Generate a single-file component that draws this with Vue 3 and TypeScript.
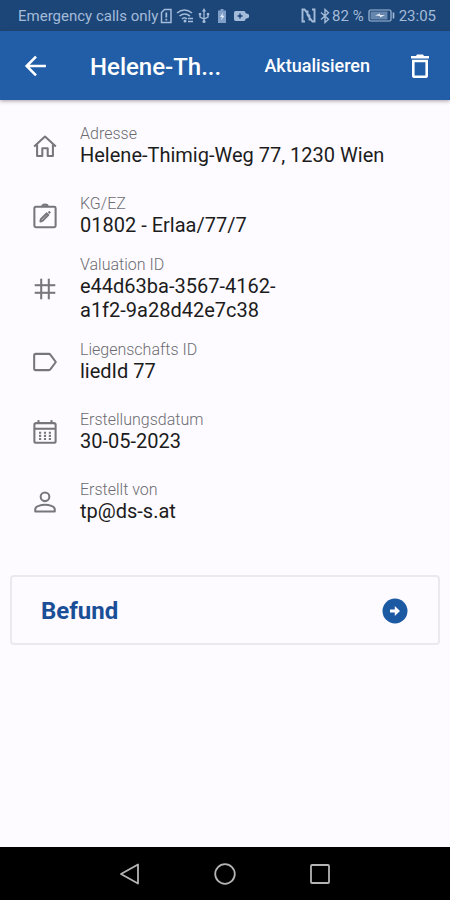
<script setup lang="ts">
interface Detail {
  label: string
  value: string
  paths: string[]
}

const details: Detail[] = [
  {
    label: 'Adresse',
    value: 'Helene-Thimig-Weg 77, 1230 Wien',
    paths: ['M2 12.5 12 3.2 22 12.500', 'M4.700 10.500V21.300H9.500V14H14.500V21.300H19.300V10.500'],
  },
  {
    label: 'KG/EZ',
    value: '01802 - Erlaa/77/7',
    paths: [
      'M3.500 3.500H20.500Q21.800 3.500 21.800 4.800V21Q21.800 22.300 20.500 22.300H3.500Q2.200 22.300 2.200 21V4.800Q2.200 3.500 3.500 3.500Z',
      'M9.500 3.500Q9.500 1.500 12 1.500T14.500 3.500',
      'M7.800 17 8.200 14.900 13.500 9.600 15 11.100 9.700 16.500Z',
      'M15.300 7.900 16.800 9.400',
    ],
  },
  {
    label: 'Valuation ID',
    value: 'e44d63ba-3567-4162-\na1f2-9a28d42e7c38',
    paths: ['M8.500 2.500V21.500', 'M15.500 2.500V21.500', 'M2.500 8.500H21.500', 'M2.500 15.500H21.500'],
  },
  {
    label: 'Liegenschafts ID',
    value: 'liedId 77',
    paths: ['M3.5 4.500H15.5Q16.5 4.500 17.1 5.4L22 12 17.1 18.6Q16.5 19.500 15.5 19.500H3.5Q2 19.500 2 18V6Q2 4.500 3.5 4.500Z'],
  },
  {
    label: 'Erstellungsdatum',
    value: '30-05-2023',
    paths: [
      'M4 3.8H20Q21.8 3.8 21.8 5.3V20.5Q21.8 22 20 22H4Q2.2 22 2.2 20.5V5.3Q2.2 3.8 4 3.8Z',
      'M2.2 9H21.800',
      'M6 1V4.500',
      'M18 1V4.500',
      'M6.500 12.700H8.500M11 12.700H13M15.500 12.700H17.500',
      'M6.500 15.600H8.500M11 15.600H13M15.500 15.600H17.500',
      'M6.500 18.500H8.500M11 18.500H13M15.500 18.500H17.500',
    ],
  },
  {
    label: 'Erstellt von',
    value: 'tp@ds-s.at',
    paths: [
      'M12 3.2A4 4 0 1 1 12 11.2A4 4 0 1 1 12 3.2Z',
      'M3 20.8V18.6C3 15.9 8.5 14.6 12 14.6S21 15.9 21 18.6V20.8Z',
    ],
  },
]
</script>

<template>
  <div class="screen">
    <div class="status">
      <div class="status-group">
        <span>Emergency calls only</span>
        <svg class="sim" width="12" height="16" viewBox="0 0 12 16" aria-hidden="true">
          <path d="M4.5 1.5H11V14.5H1.5V4.5Z" fill="none" stroke="currentColor" stroke-width="1.5" />
          <path d="M6.300 4.500V9.500M6.300 10.800V12.500" fill="none" stroke="currentColor" stroke-width="1.8" />
        </svg>
        <svg class="wifi" width="18" height="16" viewBox="0 0 18 16" aria-hidden="true">
          <g fill="none" stroke="currentColor" stroke-width="1.6">
            <path d="M1 5Q8.500-1 16 5" />
            <path d="M3.500 8Q8.500 4 14 8" />
            <path d="M6 11Q8.500 8.500 11 11" />
            <path d="M12 10.500H17M12 13.500H17" />
          </g>
          <circle cx="9" cy="13" r="1.500" fill="currentColor" />
        </svg>
        <svg class="usb" width="12" height="16" viewBox="0 0 12 16" aria-hidden="true">
          <path d="M6 2V13M2 6V9L6 11 10 9V6" fill="none" stroke="currentColor" stroke-width="1.3" />
          <path d="M6 0 8 3.500H4ZM.8 5H3.200V7.300H.8ZM8.800 5H11.200V7.300H8.800Z" fill="currentColor" />
          <circle cx="6" cy="13.500" r="1.600" fill="currentColor" />
        </svg>
        <svg class="cell" width="8" height="14" viewBox="0 0 8 14" aria-hidden="true">
          <path d="M2.500 0H5.500V1.500H8V14H0V1.500H2.500Z" fill="#7f9fc9" />
          <path d="M5 3.500 2 8H4L3 11.500 6.500 6.800H4.500Z" fill="#e3ecf8" />
        </svg>
        <svg class="cam" width="16" height="12" viewBox="0 0 16 12" aria-hidden="true">
          <path d="M1.500 1H10Q11.500 1 11.500 3L15 4.500V7.500L11.500 9Q11.500 11 10 11H1.500Q0 11 0 9V3Q0 1 1.500 1Z" fill="currentColor" />
          <path d="M6 3.500V8.500M3.500 6H8.500" stroke="#1c4677" stroke-width="1.500" />
        </svg>
      </div>
      <div class="status-group">
        <svg width="15" height="15" viewBox="0 0 15 15" aria-hidden="true">
          <path d="M4 13.500H1.500V1.500H3.500L8.500 8V12.500M11 1.500H13.500V13.500H11.500L6.500 7V2.500" fill="none" stroke="currentColor" stroke-width="1.900" />
        </svg>
        <svg class="bluetooth" width="10" height="16" viewBox="0 0 10 16" aria-hidden="true">
          <path d="M1 4.500 8.500 11.300 5 14.500V1.500L8.500 4.700 1 11.500" fill="none" stroke="currentColor" stroke-width="1.400" />
        </svg>
        <span>82 %</span>
        <svg class="battery" width="27" height="13" viewBox="0 0 27 13" aria-hidden="true">
          <rect x="1" y="1" width="22" height="11" rx="1.500" fill="none" stroke="currentColor" stroke-width="1.200" />
          <rect x="2.500" y="2.500" width="17" height="8" fill="currentColor" opacity=".55" />
          <path d="M25.500 3.500V9.500" stroke="currentColor" stroke-width="1.600" />
          <path d="M7 6.500 12 4.500V6H17L12 8.500V7Z" fill="#e3ecf8" />
        </svg>
        <span>23:05</span>
      </div>
    </div>

    <header class="bar">
      <button class="icon-button" type="button" aria-label="Zurück">
        <svg width="28" height="28" viewBox="0 0 24 24" aria-hidden="true">
          <path d="M20.500 12H4.500M12 4 4 12 12 20" fill="none" stroke="currentColor" stroke-width="2.200" />
        </svg>
      </button>
      <h1 class="title">Helene-Th...</h1>
      <button class="refresh" type="button">Aktualisieren</button>
      <button class="icon-button trash" type="button" aria-label="Löschen">
        <svg width="20" height="26" viewBox="0 0 20 26" aria-hidden="true">
          <path d="M1 3H6L7 1.500H13L14 3H19V5.500H1Z" fill="currentColor" />
          <path d="M3.300 8H16.700V22.500Q16.700 23.800 15.400 23.800H4.600Q3.300 23.800 3.300 22.500Z" fill="none" stroke="currentColor" stroke-width="2.600" />
        </svg>
      </button>
    </header>

    <main class="content">
      <dl class="details">
        <div v-for="item in details" :key="item.label" class="row">
          <svg class="row-icon" width="26" height="26" viewBox="0 0 24 24" aria-hidden="true">
            <path v-for="d in item.paths" :key="d" :d="d" />
          </svg>
          <div class="row-text">
            <dt>{{ item.label }}</dt>
            <dd>{{ item.value }}</dd>
          </div>
        </div>
      </dl>

      <button class="card" type="button">
        <span>Befund</span>
        <svg width="26" height="26" viewBox="0 0 26 26" aria-hidden="true">
          <circle cx="13" cy="13" r="12.500" fill="#1c59a3" />
          <path d="M8 11.500H12.800V8L18 13 12.800 18V14.500H8Z" fill="#fff" />
        </svg>
      </button>
    </main>

    <nav class="system">
      <button type="button" aria-label="Zurück">
        <svg width="22" height="22" viewBox="0 0 22 22" aria-hidden="true">
          <path d="M19 1.500V20.500L2 11Z" />
        </svg>
      </button>
      <button type="button" aria-label="Startseite">
        <svg width="22" height="22" viewBox="0 0 22 22" aria-hidden="true">
          <circle cx="11" cy="11" r="9.800" />
        </svg>
      </button>
      <button type="button" aria-label="Übersicht">
        <svg width="22" height="22" viewBox="0 0 22 22" aria-hidden="true">
          <rect x="2" y="2" width="18" height="18" rx="1" />
        </svg>
      </button>
    </nav>
  </div>
</template>

<style>
body {
  background: #fdfbff;
}
</style>

<style scoped>
.screen {
  display: flex;
  flex-direction: column;
  min-height: 100vh;
  background: #fdfbff;
  color: #1c1c20;
  font-family: Roboto, "Liberation Sans", sans-serif;
}

button {
  padding: 0;
  border: 0;
  background: none;
  color: inherit;
  font: inherit;
  cursor: pointer;
}

svg {
  display: block;
  flex: none;
}

.status {
  display: flex;
  justify-content: space-between;
  align-items: center;
  height: 31px;
  padding: 0 14px 0 18px;
  background: #1c4677;
  color: #a4bbda;
  font-size: 15px;
  white-space: nowrap;
}

.status-group {
  display: flex;
  align-items: center;
}

.sim {
  margin-left: 2px;
}

.wifi,
.usb {
  margin-left: 4px;
}

.cell,
.cam {
  margin-left: 8px;
}

.bluetooth {
  margin: 0 2px 0 4px;
}

.battery {
  margin: 0 4px;
}

.bar {
  display: flex;
  align-items: center;
  height: 69px;
  padding: 0 16px 0 22px;
  background: #225ea7;
  color: #fff;
  box-shadow: 0 1px 4px rgba(60, 40, 50, 0.45);
}

.icon-button {
  display: grid;
  place-items: center;
  width: 28px;
  height: 48px;
}

.title {
  flex: 1;
  margin: 0 0 0 40px;
  padding-top: 2px;
  font-size: 24px;
  font-weight: 500;
  line-height: 32px;
  white-space: nowrap;
}

.refresh {
  height: 48px;
  font-size: 18px;
  font-weight: 500;
}

.trash {
  margin-left: 36px;
}

.content {
  flex: 1;
  padding: 11px 10px 24px;
}

.details {
  margin: 0;
}

.row {
  display: flex;
  align-items: center;
  gap: 22px;
  min-height: 70px;
  padding: 5px 22px;
  box-sizing: border-box;
}

.row-icon {
  fill: none;
  stroke: #77777b;
  stroke-width: 1.9;
  stroke-linejoin: round;
}

.row-text {
  min-width: 0;
}

dt {
  color: #6c6c70;
  font-size: 16px;
  font-weight: 300;
  line-height: 18px;
}

dd {
  margin: 0;
  font-size: 20px;
  line-height: 24px;
  white-space: pre-line;
}

.card {
  display: flex;
  justify-content: space-between;
  align-items: center;
  width: 100%;
  height: 70px;
  margin-top: 38px;
  padding: 2px 30px 0 29px;
  border: 2px solid #ebe9ed;
  border-radius: 4px;
  color: #1a4f97;
  font-size: 24px;
  font-weight: 700;
}

.system {
  display: flex;
  justify-content: center;
  align-items: center;
  gap: 73px;
  height: 53px;
  background: #000;
}

.system svg {
  fill: none;
  stroke: #b4b4b4;
  stroke-width: 1.8;
  stroke-linejoin: round;
}
</style>
